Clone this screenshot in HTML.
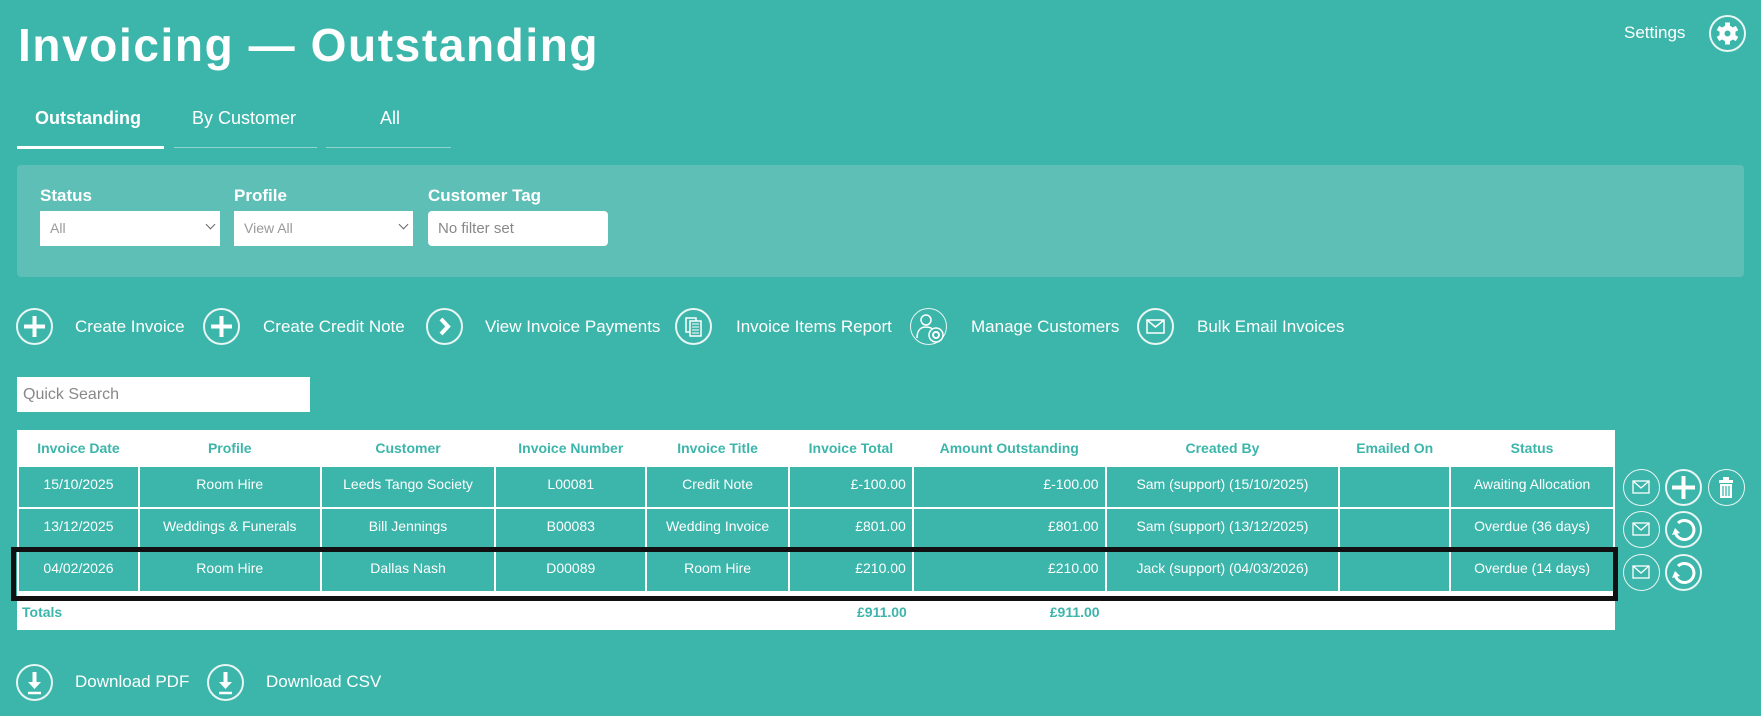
<!DOCTYPE html>
<html><head><meta charset="utf-8"><style>
*{box-sizing:border-box;margin:0;padding:0}
body{width:1761px;height:716px;background:#3cb5aa;font-family:"Liberation Sans",sans-serif;color:#fff;position:relative;overflow:hidden}
.a{position:absolute;white-space:nowrap}
h1{position:absolute;left:18px;top:15px;font-size:46px;font-weight:bold;letter-spacing:1.6px;line-height:60px}
.tab{position:absolute;top:108px;font-size:18px}
.ul{position:absolute;top:147px;height:1px;background:#8fd3cc}
.panel{position:absolute;left:17px;top:165px;width:1727px;height:112px;background:#5ebfb6;border-radius:4px}
.lbl{position:absolute;top:186px;font-size:17px;font-weight:bold}
.inp{position:absolute;top:211px;height:35px;background:#fff;color:#999;font-size:14px;padding:9px 10px}
.chev{position:absolute;right:6px;top:10px;width:7px;height:7px;border-right:1.5px solid #666;border-bottom:1.5px solid #666;transform:rotate(45deg)}
.ic{position:absolute;width:37px;height:37px;border:2px solid #e8f6f4;border-radius:50%}
.ic svg{position:absolute;left:0;top:0}
.t{position:absolute;font-size:17px;top:317px}
table{position:absolute;left:17px;top:430px;width:1598px;border-collapse:collapse;background:#fff;font-size:14px}
th{color:#3cb5aa;font-weight:bold;height:36px;font-size:14px}
td{background:#3cb5aa;border:2px solid #fff;text-align:center;height:42px;color:#fff;vertical-align:top;padding-top:9px}
td.r{text-align:right;padding-right:6px}
tr.tot td{background:#fff;color:#3cb5aa;font-weight:bold;border:none;height:38px;vertical-align:middle;padding-top:0}
</style></head><body>
<h1>Invoicing — Outstanding</h1>
<div class="a" style="left:1624px;top:23px;font-size:17px">Settings</div>
<div class="ic" style="left:1709px;top:15px">
<svg width="33" height="33" viewBox="0 0 33 33"><g fill="#fff" transform="translate(16.5,16.5)"><circle r="8"/><rect x="-2.5" y="-11" width="5" height="22"/><rect x="-2.5" y="-11" width="5" height="22" transform="rotate(60)"/><rect x="-2.5" y="-11" width="5" height="22" transform="rotate(120)"/><circle r="3" fill="#3cb5aa"/></g></svg></div>

<div class="tab" style="left:35px;font-weight:bold">Outstanding</div>
<div class="tab" style="left:192px">By Customer</div>
<div class="tab" style="left:380px">All</div>
<div class="ul" style="left:17px;width:147px;height:3px;top:146px;background:#fff"></div>
<div class="ul" style="left:174px;width:143px"></div>
<div class="ul" style="left:326px;width:125px"></div>

<div class="panel"></div>
<div class="lbl" style="left:40px">Status</div>
<div class="lbl" style="left:234px">Profile</div>
<div class="lbl" style="left:428px">Customer Tag</div>
<div class="inp" style="left:40px;width:180px">All<span class="chev"></span></div>
<div class="inp" style="left:234px;width:179px">View All<span class="chev"></span></div>
<div class="inp" style="left:428px;width:180px;border-radius:4px;color:#888;font-size:15px">No filter set</div>

<div class="ic" style="left:16px;top:308px"><svg width="33" height="33"><path d="M16.5 6v21M6 16.5h21" stroke="#fff" stroke-width="4"/></svg></div>
<div class="t" style="left:75px">Create Invoice</div>
<div class="ic" style="left:203px;top:308px"><svg width="33" height="33"><path d="M16.5 6v21M6 16.5h21" stroke="#fff" stroke-width="4"/></svg></div>
<div class="t" style="left:263px">Create Credit Note</div>
<div class="ic" style="left:426px;top:308px"><svg width="33" height="33"><path d="M13 9l7 7.5-7 7.5" stroke="#fff" stroke-width="4" fill="none"/></svg></div>
<div class="t" style="left:485px">View Invoice Payments</div>
<div class="ic" style="left:675px;top:308px"><svg width="33" height="33"><rect x="9" y="8" width="10" height="14" fill="none" stroke="#fff" stroke-width="1.5"/><rect x="13" y="11" width="11" height="15" fill="#3cb5aa" stroke="#fff" stroke-width="1.5"/><path d="M15 14h7M15 17h7M15 20h7M15 23h7" stroke="#fff"/></svg></div>
<div class="t" style="left:736px">Invoice Items Report</div>
<div class="ic" style="left:910px;top:308px;border-width:1.5px"><svg width="34" height="34"><circle cx="15" cy="11" r="5" fill="none" stroke="#fff" stroke-width="1.5"/><path d="M6 29c0-8 4-11 9-11s7 2 8 4" fill="none" stroke="#fff" stroke-width="1.5"/><circle cx="25" cy="26" r="7" fill="#3cb5aa" stroke="#fff" stroke-width="1.5"/><circle cx="25" cy="26" r="3" fill="none" stroke="#fff" stroke-width="2"/></svg></div>
<div class="t" style="left:971px">Manage Customers</div>
<div class="ic" style="left:1137px;top:308px"><svg width="33" height="33"><rect x="8" y="10" width="17" height="13" fill="none" stroke="#fff" stroke-width="1.5"/><path d="M8 10l8.5 7 8.5-7" fill="none" stroke="#fff" stroke-width="1.5"/></svg></div>
<div class="t" style="left:1197px">Bulk Email Invoices</div>

<div class="a" style="left:17px;top:377px;width:293px;height:35px;background:#fff;color:#888;font-size:16px;padding:9px 6px">Quick Search</div>

<table>
<colgroup><col style="width:121px"><col style="width:182px"><col style="width:175px"><col style="width:151px"><col style="width:143px"><col style="width:124px"><col style="width:193px"><col style="width:234px"><col style="width:111px"><col style="width:164px"></colgroup>
<tr><th>Invoice Date</th><th>Profile</th><th>Customer</th><th>Invoice Number</th><th>Invoice Title</th><th>Invoice Total</th><th>Amount Outstanding</th><th>Created By</th><th>Emailed On</th><th>Status</th></tr>
<tr><td>15/10/2025</td><td>Room Hire</td><td>Leeds Tango Society</td><td>L00081</td><td>Credit Note</td><td class="r">£-100.00</td><td class="r">£-100.00</td><td>Sam (support) (15/10/2025)</td><td></td><td>Awaiting Allocation</td></tr>
<tr><td>13/12/2025</td><td>Weddings &amp; Funerals</td><td>Bill Jennings</td><td>B00083</td><td>Wedding Invoice</td><td class="r">£801.00</td><td class="r">£801.00</td><td>Sam (support) (13/12/2025)</td><td></td><td>Overdue (36 days)</td></tr>
<tr><td>04/02/2026</td><td>Room Hire</td><td>Dallas Nash</td><td>D00089</td><td>Room Hire</td><td class="r">£210.00</td><td class="r">£210.00</td><td>Jack (support) (04/03/2026)</td><td></td><td>Overdue (14 days)</td></tr>
<tr class="tot"><td style="text-align:left;padding-left:4px">Totals</td><td></td><td></td><td></td><td></td><td class="r">£911.00</td><td class="r">£911.00</td><td></td><td></td><td></td></tr>
</table>
<div class="a" style="left:11px;top:547px;width:1607px;height:54px;border:5px solid #111"></div>

<div class="ic" style="left:1623px;top:469px;border-width:1.5px"><svg width="34" height="34"><rect x="9" y="11" width="16" height="12" fill="none" stroke="#fff" stroke-width="1.3"/><path d="M9 11l8 7 8-7" fill="none" stroke="#fff" stroke-width="1.3"/></svg></div>
<div class="ic" style="left:1665px;top:469px"><svg width="33" height="33"><path d="M16.5 5v23M5 16.5h23" stroke="#fff" stroke-width="4"/></svg></div>
<div class="ic" style="left:1708px;top:469px;border-width:1.5px"><svg width="34" height="34"><rect x="10" y="10" width="14" height="3" fill="#fff"/><rect x="14" y="7" width="6" height="3" fill="#fff"/><path d="M11 14h12v14H11z" fill="#fff"/><path d="M14 16v10M17 16v10M20 16v10" stroke="#3cb5aa" stroke-width="1.3"/></svg></div>
<div class="ic" style="left:1623px;top:511px;border-width:1.5px"><svg width="34" height="34"><rect x="9" y="11" width="16" height="12" fill="none" stroke="#fff" stroke-width="1.3"/><path d="M9 11l8 7 8-7" fill="none" stroke="#fff" stroke-width="1.3"/></svg></div>
<div class="ic" style="left:1665px;top:511px"><svg width="33" height="33"><path d="M11 10a9.5 9.5 0 1 1-3 8" fill="none" stroke="#fff" stroke-width="3"/><path d="M5 22l3-7 5 5z" fill="#fff"/></svg></div>
<div class="ic" style="left:1623px;top:554px;border-width:1.5px"><svg width="34" height="34"><rect x="9" y="11" width="16" height="12" fill="none" stroke="#fff" stroke-width="1.3"/><path d="M9 11l8 7 8-7" fill="none" stroke="#fff" stroke-width="1.3"/></svg></div>
<div class="ic" style="left:1665px;top:554px"><svg width="33" height="33"><path d="M11 10a9.5 9.5 0 1 1-3 8" fill="none" stroke="#fff" stroke-width="3"/><path d="M5 22l3-7 5 5z" fill="#fff"/></svg></div>

<div class="ic" style="left:16px;top:664px"><svg width="33" height="33"><path d="M16.5 6v12" stroke="#fff" stroke-width="4"/><path d="M10 16l6.5 7 6.5-7z" fill="#fff"/><path d="M10 27h13" stroke="#fff" stroke-width="2.5"/></svg></div>
<div class="a" style="left:75px;top:672px;font-size:17px">Download PDF</div>
<div class="ic" style="left:207px;top:664px"><svg width="33" height="33"><path d="M16.5 6v12" stroke="#fff" stroke-width="4"/><path d="M10 16l6.5 7 6.5-7z" fill="#fff"/><path d="M10 27h13" stroke="#fff" stroke-width="2.5"/></svg></div>
<div class="a" style="left:266px;top:672px;font-size:17px">Download CSV</div>
</body></html>
